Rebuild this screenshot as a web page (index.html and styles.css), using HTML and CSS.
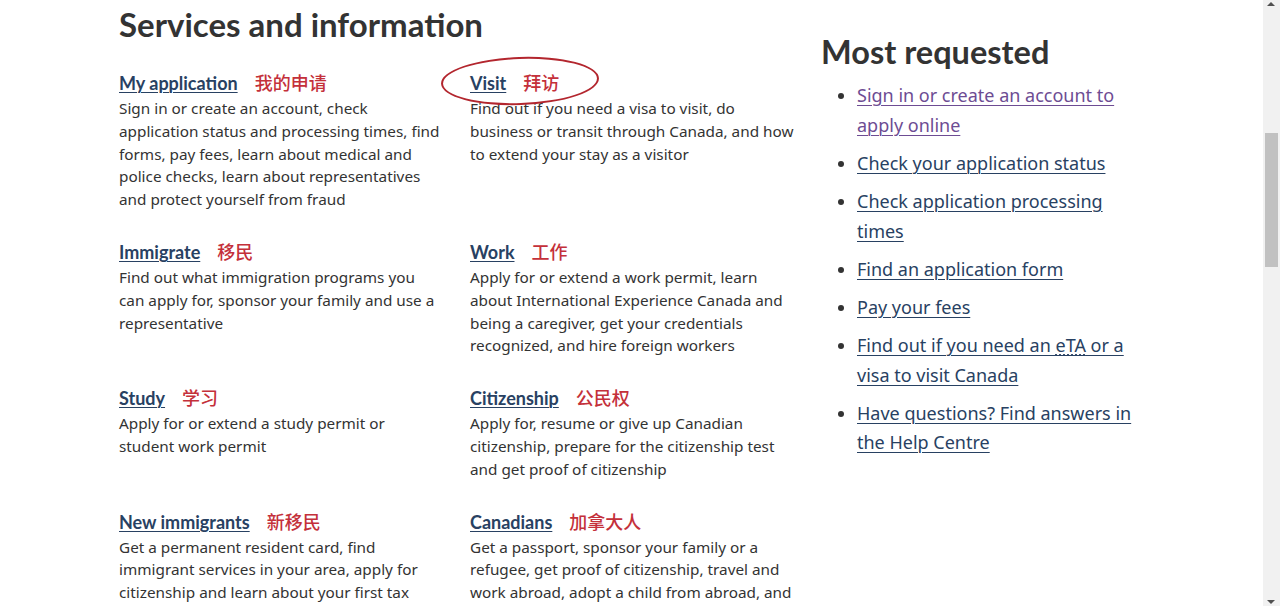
FILE: index.html
```html
<!DOCTYPE html>
<html lang="en">
<head>
<meta charset="utf-8">
<title>Services and information</title>
<link rel="stylesheet" href="styles.css">
</head>
<body>
<div class="page">
  <section class="services">
    <h2 class="title">Services and information</h2>
    <div class="grid">
      <div class="item">
        <h3 class="item-head"><a href="#">My application</a><span class="zh">我的申请</span></h3>
        <p class="desc">Sign in or create an account, check application status and processing times, find forms, pay fees, learn about medical and police checks, learn about representatives and protect yourself from fraud</p>
      </div>
      <div class="item">
        <h3 class="item-head circled"><a href="#">Visit</a><span class="zh">拜访</span><span class="ring"></span></h3>
        <p class="desc">Find out if you need a visa to visit, do business or transit through Canada, and how to extend your stay as a visitor</p>
      </div>
      <div class="item">
        <h3 class="item-head"><a href="#">Immigrate</a><span class="zh">移民</span></h3>
        <p class="desc">Find out what immigration programs you can apply for, sponsor your family and use a representative</p>
      </div>
      <div class="item">
        <h3 class="item-head"><a href="#">Work</a><span class="zh">工作</span></h3>
        <p class="desc">Apply for or extend a work permit, learn about International Experience Canada and being a caregiver, get your credentials recognized, and hire foreign workers</p>
      </div>
      <div class="item">
        <h3 class="item-head"><a href="#">Study</a><span class="zh">学习</span></h3>
        <p class="desc">Apply for or extend a study permit or student work permit</p>
      </div>
      <div class="item">
        <h3 class="item-head"><a href="#">Citizenship</a><span class="zh">公民权</span></h3>
        <p class="desc">Apply for, resume or give up Canadian citizenship, prepare for the citizenship test and get proof of citizenship</p>
      </div>
      <div class="item">
        <h3 class="item-head"><a href="#">New immigrants</a><span class="zh">新移民</span></h3>
        <p class="desc">Get a permanent resident card, find immigrant services in your area, apply for citizenship and learn about your first tax return</p>
      </div>
      <div class="item">
        <h3 class="item-head"><a href="#">Canadians</a><span class="zh">加拿大人</span></h3>
        <p class="desc">Get a passport, sponsor your family or a refugee, get proof of citizenship, travel and work abroad, adopt a child from abroad, and more</p>
      </div>
    </div>
  </section>
  <aside class="requested">
    <h2 class="title title-side">Most requested</h2>
    <ul class="links">
      <li><a class="visited" href="#">Sign in or create an account to apply online</a></li>
      <li><a href="#">Check your application status</a></li>
      <li><a href="#">Check application processing times</a></li>
      <li><a href="#">Find an application form</a></li>
      <li><a href="#">Pay your fees</a></li>
      <li><a href="#">Find out if you need an <abbr title="Electronic Travel Authorization">eTA</abbr> or a visa to visit Canada</a></li>
      <li><a href="#">Have questions? Find answers in the Help Centre</a></li>
    </ul>
  </aside>
</div>
<div class="scrollbar">
  <span class="arrow arrow-up"></span>
  <span class="thumb"></span>
  <span class="arrow arrow-down"></span>
</div>
</body>
</html>
```

FILE: styles.css
```css
html {
  overflow: hidden;
}
body {
  margin: 0;
  background: #fff;
  color: #333;
  font-family: "Noto Sans", "Open Sans", sans-serif;
}
.page {
  display: flex;
  padding-left: 119px;
  width: 1263px;
  box-sizing: border-box;
}
.services {
  width: 702px;
  flex: none;
}
.requested {
  width: 320px;
  flex: none;
}
.title {
  margin: 2px 0 0;
  font-family: Lato, "Liberation Sans", sans-serif;
  font-weight: 700;
  font-size: 33px;
  line-height: 44px;
  color: #333;
}
.title-side {
  margin-top: 30px;
  font-size: 32.5px;
}
.grid {
  display: grid;
  grid-template-columns: 351px 351px;
  margin-top: 23px;
  row-gap: 27px;
}
.item-head {
  position: relative;
  margin: 0;
  font-family: Lato, "Liberation Sans", sans-serif;
  font-weight: 700;
  font-size: 18px;
  line-height: 26px;
  display: flex;
  align-items: baseline;
}
.item-head a {
  color: #284162;
  text-decoration: underline;
  text-underline-offset: 2px;
  text-decoration-thickness: 1px;
}
.zh {
  margin-left: 17px;
  font-family: "Noto Sans CJK SC", sans-serif;
  font-weight: 500;
  font-size: 18px;
  color: #c4303a;
}
.ring {
  position: absolute;
  left: -29px;
  top: -12px;
  width: 154px;
  height: 44px;
  border: 2.5px solid #b3262e;
  border-radius: 50%;
  transform: rotate(-2deg);
}
.desc {
  margin: 1px 0 0;
  font-size: 15.3px;
  line-height: 22.8px;
  color: #333;
  width: 324px;
}
.links {
  margin: 7px 0 0;
  padding: 0 0 0 36px;
  font-size: 18px;
  line-height: 29.7px;
}
.links li {
  margin-bottom: 8.4px;
}
.links a {
  color: #284162;
  text-decoration: underline;
  text-underline-offset: 3px;
  text-decoration-thickness: 1px;
}
.links a.visited {
  color: #6d4c93;
}
abbr {
  text-decoration: underline dotted;
}
.scrollbar {
  position: fixed;
  top: 0;
  right: 0;
  width: 17px;
  height: 606px;
  background: #f1f1f1;
}
.thumb {
  position: absolute;
  left: 2px;
  top: 133px;
  width: 13px;
  height: 134px;
  background: #c1c1c1;
}
.arrow {
  position: absolute;
  left: 4px;
  width: 0;
  height: 0;
  border-left: 4.5px solid transparent;
  border-right: 4.5px solid transparent;
}
.arrow-up {
  top: 2px;
  border-bottom: 4.5px solid #505050;
}
.arrow-down {
  bottom: 2px;
  border-top: 4.5px solid #505050;
}
```
